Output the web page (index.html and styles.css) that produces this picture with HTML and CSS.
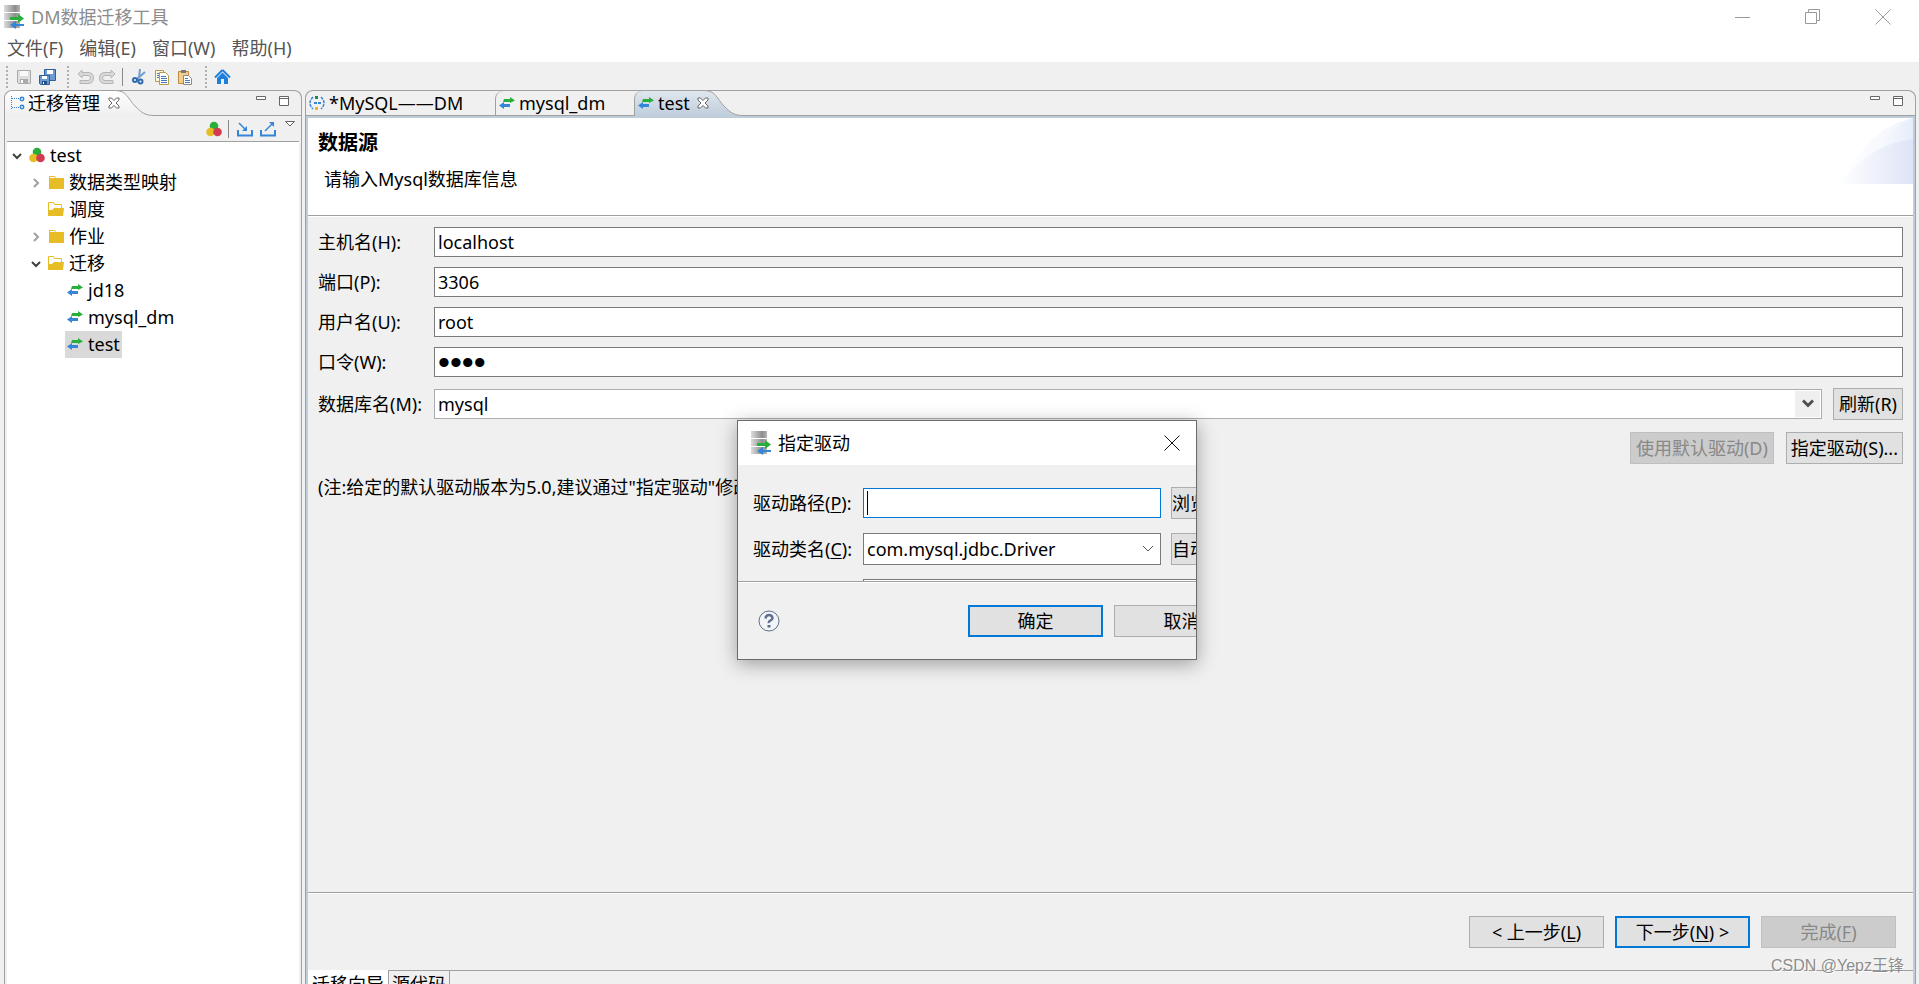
FILE: index.html
```html
<!DOCTYPE html>
<html lang="zh-CN">
<head>
<meta charset="utf-8">
<title>DM数据迁移工具</title>
<link rel="stylesheet" href="styles.css">
</head>
<body>
<svg class="defs" width="0" height="0" aria-hidden="true">
  <defs>
    <linearGradient id="g-metal" x1="0" y1="0" x2="1" y2="0"><stop offset="0" stop-color="#dcdcdc"/><stop offset=".7" stop-color="#8d8d8d"/><stop offset="1" stop-color="#b5b5b5"/></linearGradient>
    <linearGradient id="g-tab" x1="0" y1="0" x2="0" y2="1"><stop offset="0" stop-color="#ffffff"/><stop offset="1" stop-color="#efefef"/></linearGradient>
    <linearGradient id="g-tab-blue" x1="0" y1="0" x2="0" y2="1"><stop offset="0" stop-color="#e0e7ee"/><stop offset="1" stop-color="#bfcddb"/></linearGradient>
    <linearGradient id="g-wave" x1="0" y1="0" x2="1" y2="0"><stop offset="0" stop-color="#ffffff"/><stop offset="1" stop-color="#dde4f6"/></linearGradient>
    <linearGradient id="g-wave-light" x1="0" y1="0" x2="1" y2="0"><stop offset="0" stop-color="#ffffff"/><stop offset="1" stop-color="#e6edfa"/></linearGradient>
    <symbol id="i-app" viewBox="0 0 22 24">
      <rect x="1" y="0" width="16" height="7" fill="url(#g-metal)"/><rect x="1" y="8" width="16" height="7" fill="url(#g-metal)"/><rect x="1" y="16" width="16" height="7" fill="url(#g-metal)"/>
      <path d="M7 12h8V9l6 4.500-6 4.500v-3H7z" fill="#27ae3b"/><path d="M21 19h-8v-3l-6 4 6 4v-3h8z" fill="#3586d8"/>
    </symbol>
    <symbol id="i-swap" viewBox="0 0 16 12">
      <path d="M5 2h6V0l5 3.500L11 6V5H4z" fill="#27ae3b"/><path d="M11 7H5V5L0 8.500 5 12v-2h6z" fill="#3586d8"/>
    </symbol>
    <symbol id="i-balls" viewBox="0 0 16 16">
      <circle cx="8" cy="5" r="4.300" fill="#27ae3b"/><circle cx="4.500" cy="11" r="4.300" fill="#e6bd26"/><circle cx="11.500" cy="11" r="4.300" fill="#d23b50"/>
    </symbol>
    <symbol id="i-folder" viewBox="0 0 16 16"><path d="M1 2h6l1 2h8v11H1z" fill="#e6bd26"/><path d="M2 3.500h5" stroke="#fff"/></symbol>
    <symbol id="i-folder-open" viewBox="0 0 16 16"><path d="M.5 14V1.500h5l1 2h7V7" fill="none" stroke="#e6bd26"/><path d="M0 15V9h4l2-2h10l-1 8z" fill="#e6bd26"/></symbol>
    <symbol id="i-close" viewBox="0 0 12 12"><path d="M1 1h2.500L6 3.500 8.500 1H11v2L8 6l3 3v2H8.500L6 8.500 3.500 11H1V9l3-3-3-3z" fill="#fff" stroke="#666"/></symbol>
    <symbol id="i-min" viewBox="0 0 10 10"><path d="M.5.500h9v3h-9z" fill="#fff" stroke="#666"/></symbol>
    <symbol id="i-max" viewBox="0 0 10 10"><path d="M.5.500h9v9h-9zM.5 2.500h9" fill="#fff" stroke="#666"/></symbol>
    <symbol id="i-down" viewBox="0 0 10 10"><path d="M1 3l4 4 4-4" fill="none" stroke="#404040" stroke-width="2"/></symbol>
    <symbol id="i-right" viewBox="0 0 10 10"><path d="M3 1l4 4-4 4" fill="none" stroke="#a0a0a0" stroke-width="2"/></symbol>
    <symbol id="i-curve" viewBox="0 0 40 26"><path d="M0 .5C12 .5 13 9 20 16S30 25.500 40 25.500V26H0z"/><path class="edge" d="M0 .5C12 .5 13 9 20 16S30 25.500 40 25.500" fill="none" stroke="#a0a0a0"/></symbol>
  </defs>
</svg>

<header class="titlebar">
  <svg class="app-icon"><use href="#i-app"/></svg>
  <h1 class="app-title">DM数据迁移工具</h1>
  <button class="win-btn" aria-label="最小化"><svg width="16" height="16"><path d="M0 8.500h15" stroke="#999"/></svg></button>
  <button class="win-btn" aria-label="还原"><svg width="16" height="16"><path d="M.5 3.500h11v11H.5zM3.500 3.500v-3h11v11h-3" fill="none" stroke="#999"/></svg></button>
  <button class="win-btn" aria-label="关闭"><svg width="16" height="16"><path d="M.5.500l15 15M15.500.500l-15 15" stroke="#999"/></svg></button>
</header>

<nav class="menubar">
  <button class="menu">文件(F)</button><button class="menu">编辑(E)</button><button class="menu">窗口(W)</button><button class="menu">帮助(H)</button>
</nav>

<div class="toolbar">
  <span class="grip grip-first"></span>
  <button class="tool" aria-label="保存"><svg width="16" height="16"><path d="M1.500 1.500h13v13h-12l-1-1z" fill="#dedede" stroke="#aaa"/><path d="M4 2h8v5H4z" fill="#f8f8f8"/><path d="M4 10h8v4H4z" fill="#aaa"/><path d="M5 11h2v3H5z" fill="#fff"/></svg></button>
  <button class="tool" aria-label="全部保存"><svg width="18" height="18"><path d="M6.500 1.500h11v11h-11z" fill="#6d9bd1" stroke="#2c5f9e"/><path d="M9 2h6v4H9z" fill="#fff"/><path d="M1.500 7.500h10v9h-9l-1-1z" fill="#6d9bd1" stroke="#2c5f9e"/><path d="M4 8h5v3H4z" fill="#fff"/><path d="M4 13h5v3H4z" fill="#234f88"/><path d="M5 14h1v2H5z" fill="#fff"/></svg></button>
  <span class="grip"></span>
  <button class="tool" aria-label="撤销"><svg width="18" height="16"><path d="M6 1L2 5l4 4V6.500h6q2.500 0 2.500 2.500T12 11.500H4v3h8q5.500 0 5.500-5.500T12 3.500H6z" fill="#d9d9d9" stroke="#b5b5b5"/></svg></button>
  <button class="tool" aria-label="重做"><svg width="18" height="16"><path d="M12 1l4 4-4 4V6.500H6Q3.500 6.500 3.500 9T6 11.500h8v3H6Q.500 14.500.500 9T6 3.500h6z" fill="#d9d9d9" stroke="#b5b5b5"/></svg></button>
  <span class="sep"></span>
  <button class="tool" aria-label="剪切"><svg width="14" height="16"><path d="M8 0L7 9M13 3L5 10" stroke="#6f9fcf" stroke-width="2"/><circle cx="3" cy="11" r="2" fill="none" stroke="#2e6cae" stroke-width="2"/><circle cx="8.500" cy="12.500" r="2" fill="none" stroke="#2e6cae" stroke-width="2"/></svg></button>
  <button class="tool" aria-label="复制"><svg width="16" height="16"><path d="M1.500 1.500h8v11h-8z" fill="#fff7dc" stroke="#b89a4a"/><path d="M5.500 3.500h6l3 3v9h-9z" fill="#fff" stroke="#b89a4a"/><path d="M3 4.500h2M3 6.500h2M3 8.500h2M7 7.500h5M7 9.500h6M7 11.500h6M7 13.500h6" stroke="#4479b8"/></svg></button>
  <button class="tool" aria-label="粘贴"><svg width="16" height="16"><path d="M1.500 2.500h10v12h-10z" fill="#f3cf8f" stroke="#bd8b3d"/><path d="M4 1h5v3H4z" fill="#777"/><path d="M6.500 6.500h5l3 3v6h-8z" fill="#fff" stroke="#8a8a8a"/><path d="M8 9.500h3M8 11.500h5M8 13.500h5" stroke="#4479b8"/></svg></button>
  <span class="grip"></span>
  <button class="tool" aria-label="主页"><svg width="17" height="16"><path d="M8.500 1L16 8.500M8.500 1L1 8.500" stroke="#1e7fdc" stroke-width="2"/><path d="M8.500 3.500L14 9v6h-4v-5H7v5H3V9z" fill="#1e7fdc"/></svg></button>
</div>

<main class="workbench">
  <section class="pane nav-pane">
    <div class="strip">
      <div class="tab tab-view">
        <svg class="ic16" viewBox="0 0 16 16"><path d="M1.500 1v13M2 3.500h7M2 12.500h7" stroke="#3586d8" stroke-dasharray="1 1" fill="none"/><circle cx="12" cy="4" r="1.700" fill="none" stroke="#3586d8" stroke-width="1.500"/><circle cx="12" cy="12" r="1.700" fill="none" stroke="#3586d8" stroke-width="1.500"/></svg>
        <span>迁移管理</span>
        <button class="tab-close" aria-label="关闭视图"><svg class="ic12"><use href="#i-close"/></svg></button>
      </div>
      <svg class="curve curve-view"><use href="#i-curve"/></svg>
      <div class="strip-fill">
        <button class="pane-btn" aria-label="最小化视图"><svg class="ic10"><use href="#i-min"/></svg></button>
        <button class="pane-btn" aria-label="最大化视图"><svg class="ic10"><use href="#i-max"/></svg></button>
      </div>
    </div>
    <div class="view-tools">
      <button class="view-btn" aria-label="新建工程"><svg class="ic16"><use href="#i-balls"/></svg></button>
      <span class="sep sep-small"></span>
      <button class="view-btn" aria-label="导入"><svg class="ic16" viewBox="0 0 16 16"><path d="M1 9v5.500h14V9" fill="none" stroke="#3586d8" stroke-width="2"/><path d="M2 2l7 7" stroke="#3586d8" stroke-width="1.500"/><path d="M10 5v5H5z" fill="#3586d8"/></svg></button>
      <button class="view-btn" aria-label="导出"><svg class="ic16" viewBox="0 0 16 16"><path d="M1 9v5.500h14V9" fill="none" stroke="#3586d8" stroke-width="2"/><path d="M5 10l7-7" stroke="#3586d8" stroke-width="1.500"/><path d="M9 1h5v5z" fill="#3586d8"/></svg></button>
      <button class="view-menu" aria-label="视图菜单"><svg width="10" height="6"><path d="M.5.500h9L5 5z" fill="#fff" stroke="#666"/></svg></button>
    </div>
    <ul class="tree">
      <li class="node"><svg class="arrow"><use href="#i-down"/></svg><span class="item"><svg class="ic16"><use href="#i-balls"/></svg>test</span></li>
      <li class="node lvl1"><svg class="arrow"><use href="#i-right"/></svg><span class="item"><svg class="ic16"><use href="#i-folder"/></svg>数据类型映射</span></li>
      <li class="node lvl1"><span class="arrow"></span><span class="item"><svg class="ic16"><use href="#i-folder-open"/></svg>调度</span></li>
      <li class="node lvl1"><svg class="arrow"><use href="#i-right"/></svg><span class="item"><svg class="ic16"><use href="#i-folder"/></svg>作业</span></li>
      <li class="node lvl1"><svg class="arrow"><use href="#i-down"/></svg><span class="item"><svg class="ic16"><use href="#i-folder-open"/></svg>迁移</span></li>
      <li class="node lvl2"><span class="arrow"></span><span class="item"><svg class="swap"><use href="#i-swap"/></svg>jd18</span></li>
      <li class="node lvl2"><span class="arrow"></span><span class="item"><svg class="swap"><use href="#i-swap"/></svg>mysql_dm</span></li>
      <li class="node lvl2"><span class="arrow"></span><span class="item selected"><svg class="swap"><use href="#i-swap"/></svg>test</span></li>
    </ul>
  </section>

  <section class="pane editor-pane">
    <div class="strip">
      <div class="tab tab-idle tab-wide">
        <svg class="ic16" viewBox="0 0 16 16"><path d="M4 2Q-2 8 4 14M12 2q6 6 0 12" fill="none" stroke="#3586d8" stroke-width="1.500" stroke-dasharray="3 1"/><path d="M6 1h3v3H6z" fill="#178a4c"/><path d="M5 7h3v2H5zM9 7h3v2H9z" fill="#3586d8"/><path d="M6 12h3v3H6z" fill="#f0b323"/></svg>
        <span>*MySQL——DM</span>
      </div>
      <div class="tab tab-idle tab-mid"><svg class="swap"><use href="#i-swap"/></svg><span>mysql_dm</span></div>
      <div class="tab tab-active"><svg class="swap"><use href="#i-swap"/></svg><span>test</span>
        <button class="tab-close" aria-label="关闭编辑器"><svg class="ic12"><use href="#i-close"/></svg></button></div>
      <svg class="curve curve-active"><use href="#i-curve"/></svg>
      <div class="strip-fill">
        <button class="pane-btn" aria-label="最小化编辑器"><svg class="ic10"><use href="#i-min"/></svg></button>
        <button class="pane-btn" aria-label="最大化编辑器"><svg class="ic10"><use href="#i-max"/></svg></button>
      </div>
    </div>
    <div class="editor-body">
      <div class="wizard-head">
        <div class="wizard-text"><h2>数据源</h2><p>请输入Mysql数据库信息</p></div>
        <svg class="wave" viewBox="0 0 74 66"><path d="M0 66C16 38 40 6 74 0v66z" fill="url(#g-wave-light)" opacity=".6"/><path d="M26 66C32 38 50 8 74 0v66z" fill="url(#g-wave-light)"/><path d="M0 66C18 44 42 24 74 21v45z" fill="url(#g-wave)"/></svg>
      </div>
      <form class="wizard-form">
        <div class="fields">
          <label for="host">主机名(H):</label><input class="box" id="host" type="text" value="localhost">
          <label for="port">端口(P):</label><input class="box" id="port" type="text" value="3306">
          <label for="user">用户名(U):</label><input class="box" id="user" type="text" value="root">
          <label for="pass">口令(W):</label><input class="box pass" id="pass" type="password" value="root">
        </div>
        <div class="db-row">
          <label for="db">数据库名(M):</label>
          <div class="combo"><select class="box select" id="db"><option>mysql</option></select><span class="combo-btn"><svg width="12" height="10"><path d="M1 1.500l5 5 5-5" fill="none" stroke="#505050" stroke-width="3"/></svg></span></div>
          <button class="btn" type="button">刷新(R)</button>
        </div>
        <div class="driver-row">
          <button class="btn" type="button" disabled>使用默认驱动(D)</button>
          <button class="btn tight" type="button">指定驱动(S)...</button>
        </div>
        <p class="note">(注:给定的默认驱动版本为5.0,建议通过"指定驱动"修改</p>
      </form>
      <div class="wizard-foot">
        <button class="btn wide">&lt; 上一步(<u>L</u>)</button>
        <button class="btn wide primary">下一步(<u>N</u>) &gt;</button>
        <button class="btn wide" disabled>完成(<u>F</u>)</button>
      </div>
      <div class="page-tabs">
        <button class="page-tab current">迁移向导</button><button class="page-tab">源代码</button><span class="page-fill"></span>
      </div>
    </div>
  </section>
</main>

<div class="dialog" role="dialog" aria-label="指定驱动">
  <div class="dialog-title">
    <svg class="app-icon"><use href="#i-app"/></svg><span>指定驱动</span>
    <button class="dialog-close" aria-label="关闭对话框"><svg width="16" height="16"><path d="M.5.500l15 15M15.500.500l-15 15" stroke="#111"/></svg></button>
  </div>
  <div class="dialog-body">
    <div class="dialog-row">
      <label for="path">驱动路径(<u>P</u>):</label>
      <div class="caret-field"><input class="box focused" id="path" type="text"><span class="caret"></span></div>
      <button class="btn cut">浏览...</button>
    </div>
    <div class="dialog-row">
      <label for="cls">驱动类名(<u>C</u>):</label>
      <div class="combo"><select class="box select tall" id="cls"><option>com.mysql.jdbc.Driver</option></select><span class="combo-thin"><svg width="12" height="8"><path d="M1 1l5 5 5-5" fill="none" stroke="#555"/></svg></span></div>
      <button class="btn cut">自动获取</button>
    </div>
    <div class="dialog-row"><span class="no-label"></span><div class="box url"></div></div>
  </div>
  <div class="dialog-foot">
    <button class="help" aria-label="帮助"><svg width="22" height="22"><circle cx="11" cy="11" r="10" fill="#f4f4f6" stroke="#5f6f8c"/><path d="M7.500 8.500Q8 5 11 5t3.500 3q0 1.500-2 2.500T11 13" fill="none" stroke="#5f6f92" stroke-width="2.500"/><path d="M9.500 15h3v2.500h-3z" fill="#5f6f92"/></svg></button>
    <button class="btn wide primary">确定</button>
    <button class="btn wide">取消</button>
  </div>
</div>
<div class="watermark">CSDN @Yepz王锋</div>
</body>
</html>
```

FILE: styles.css
```css
* { box-sizing: border-box; }
body {
  margin: 0;
  height: 100vh;
  overflow: hidden;
  display: flex;
  flex-direction: column;
  background: #f0f0f0;
  color: #000;
  font: 18px/24px "Noto Sans", "Noto Sans CJK SC", sans-serif;
}
button, input, select { font: inherit; color: inherit; margin: 0; }
button { background: none; border: 0; padding: 0; white-space: nowrap; }
h1, h2, p, ul { margin: 0; padding: 0; font-weight: normal; }
svg { display: block; flex: none; }
.defs { position: absolute; }
.ic16 { width: 16px; height: 16px; }
.ic12 { width: 12px; height: 12px; }
.ic10 { width: 10px; height: 10px; }
.swap { width: 16px; height: 12px; }
.app-icon { width: 22px; height: 24px; }

.titlebar { display: flex; align-items: center; height: 34px; padding: 0 8px 0 3px; background: #fff; color: #8c8c8c; }
.app-title { flex: 1; margin-left: 6px; font-size: 18px; }
.win-btn { width: 56px; height: 32px; margin-left: 14px; display: flex; justify-content: center; align-items: center; }
.menubar { display: flex; gap: 16px; height: 28px; padding: 0 7px; background: #fff; color: #555; }
.menu { line-height: 28px; }

.toolbar { display: flex; align-items: center; height: 28px; padding: 2px 6px 0; }
.grip { width: 2px; height: 22px; margin: 0 4px 0 9px; background: repeating-linear-gradient(#b0b0b0 0 2px, transparent 2px 4px); }
.grip-first { margin-left: 0; }
.tool { width: 23px; height: 22px; display: flex; justify-content: center; align-items: center; }
.sep { width: 1px; height: 18px; margin: 0 4px 0 3px; background: #8a8a8a; }

.workbench { flex: 1; min-height: 0; display: flex; gap: 3px; padding: 0 3px 0 4px; }
.pane { display: flex; flex-direction: column; min-width: 0; border: 1px solid #a0a0a0; border-bottom: 0; border-radius: 8px 8px 0 0; }
.nav-pane { width: 298px; flex: none; }
.editor-pane { flex: 1; }
.strip { display: flex; height: 25px; }
.tab { display: flex; align-items: center; gap: 4px; padding: 0 0 1px 4px; white-space: nowrap; }
.tab-close { position: relative; z-index: 1; margin-left: 3px; }
.tab-view { padding-left: 5px; gap: 2px; background: linear-gradient(#fff, #efefef); border-radius: 8px 0 0 0; }
.tab-view .tab-close { margin-left: 6px; }
.curve { width: 40px; height: 26px; margin: -1px 0 0 -5px; }
.curve-view { fill: url(#g-tab); }
.curve-active { fill: url(#g-tab-blue); }
.strip-fill { flex: 1; display: flex; justify-content: flex-end; align-items: flex-start; gap: 13px; padding: 5px 12px 0 0; border-bottom: 1px solid #a0a0a0; }
.tab-idle { border-bottom: 1px solid #a0a0a0; }
.tab-wide { width: 189px; padding-left: 3px; }
.tab-mid { width: 139px; padding-left: 3px; border-left: 1px solid #a0a0a0; border-radius: 8px 0 0 0; }
.tab-active { padding-left: 3px; border-left: 1px solid #a0a0a0; border-radius: 8px 0 0 0; background: linear-gradient(#e0e7ee, #bfcddb); }

.view-tools { display: flex; align-items: center; justify-content: flex-end; height: 26px; margin: 0 2px; border-bottom: 1px solid #a0a0a0; padding-right: 4px; }
.view-btn { width: 23px; display: flex; justify-content: center; }
.sep-small { margin: 0 4px 0 3px; }
.view-menu { margin: 0 0 10px 6px; }
.tree { flex: 1; list-style: none; margin: 0 2px; background: #fff; }
.node { display: flex; align-items: center; height: 27px; padding-left: 5px; }
.lvl1 { padding-left: 24px; }
.lvl2 { padding-left: 43px; }
.arrow { width: 10px; height: 10px; margin-right: 5px; }
.item { display: flex; align-items: center; gap: 5px; height: 27px; padding: 0 2px 2px; }
.selected { background: #d9d9d9; }

.editor-body { flex: 1; min-height: 0; display: flex; flex-direction: column; border: 2px solid #bfcddb; border-bottom: 0; }
.wizard-head { display: flex; justify-content: space-between; height: 98px; padding-left: 10px; background: #fff; border-bottom: 1px solid #a0a0a0; }
.wizard-text { padding-top: 12px; }
.wizard-text h2 { font-size: 20px; font-weight: bold; line-height: 26px; }
.wizard-text p { margin: 11px 0 0 6px; }
.wave { width: 74px; height: 66px; }
.wizard-form { flex: 1; padding: 10px 10px 0; border-top: 1px solid #fff; }
.fields { display: grid; grid-template-columns: 116px 1fr; gap: 10px 0; align-items: center; }
.box { width: 100%; height: 30px; padding: 0 3px; border: 1px solid #7a7a7a; border-radius: 0; background: #fff; outline: 0; }
.pass { font-family: "Liberation Sans", sans-serif; font-size: 34px; line-height: 28px; }
.select { appearance: none; border-color: #abadb3; }
.db-row { display: flex; align-items: center; margin-top: 11px; }
.db-row label { width: 116px; }
.db-row .btn { margin-left: 11px; }
.combo { flex: 1; position: relative; }
.combo-btn { position: absolute; top: 2px; right: 2px; width: 25px; height: 26px; display: flex; align-items: center; justify-content: center; background: #efefef; pointer-events: none; }
.combo-thin { position: absolute; top: 12px; right: 7px; pointer-events: none; }
.btn { height: 32px; padding: 0 5px; border: 1px solid #adadad; background: #e1e1e1; }
.btn:disabled { background: #ccc; border-color: #bfbfbf; color: #888; }
.tight { padding: 0 4px; }
.wide { width: 135px; }
.primary { border: 2px solid #0078d7; }
u { text-underline-offset: 2px; }
.driver-row { display: flex; justify-content: flex-end; gap: 12px; margin-top: 12px; }
.note { margin-top: 11px; }
.wizard-foot { display: flex; justify-content: flex-end; gap: 11px; height: 78px; padding: 23px 17px 0 0; border-top: 1px solid #a0a0a0; box-shadow: inset 0 1px #fff; }
.page-tabs { display: flex; height: 14px; overflow: hidden; }
.page-tab { height: 28px; padding: 0 3px; line-height: 26px; border: 1px solid #a0a0a0; }
.current { border-color: #fff; background: #fff; }
.page-fill { flex: 1; border-top: 1px solid #a0a0a0; }

.dialog { position: absolute; left: 737px; top: 420px; width: 460px; height: 240px; display: flex; flex-direction: column; overflow: hidden; border: 1px solid #6b6b6b; background: #f0f0f0; box-shadow: 0 4px 18px rgba(0, 0, 0, .35); }
.dialog-title { display: flex; align-items: center; gap: 6px; height: 44px; padding: 0 16px 0 12px; background: #fff; }
.dialog-close { margin-left: auto; }
.dialog-body { min-height: 0; overflow: hidden; padding: 22px 0 0 15px; display: flex; flex: 1; flex-direction: column; gap: 14px; }
.dialog-row { display: flex; align-items: center; flex: none; white-space: nowrap; }
.dialog-row label, .no-label { width: 110px; flex: none; }
.dialog-row .combo, .caret-field { width: 298px; flex: none; position: relative; }
.url { flex: 1; border-right: 0; }
.tall { height: 32px; border-color: #7a7a7a; }
.dialog .combo .box { display: block; }
.focused { display: block; border-color: #0078d7; }
.caret { position: absolute; left: 4px; top: 3px; width: 1px; height: 24px; background: #000; }
.cut { margin-left: 10px; padding: 0; flex: none; }
.dialog-foot { display: flex; flex: none; height: 78px; border-top: 1px solid #a0a0a0; box-shadow: inset 0 1px #fff; padding: 23px 0 0 20px; gap: 11px; }
.dialog-foot .btn { flex: none; }
.help { width: 22px; height: 32px; margin-right: 177px; flex: none; }
.watermark { position: absolute; right: 15px; bottom: 6px; font-family: "Liberation Sans", "Noto Sans CJK SC", sans-serif; font-size: 16px; color: #8d8d8d; text-shadow: 1px 1px #fff; }
```
